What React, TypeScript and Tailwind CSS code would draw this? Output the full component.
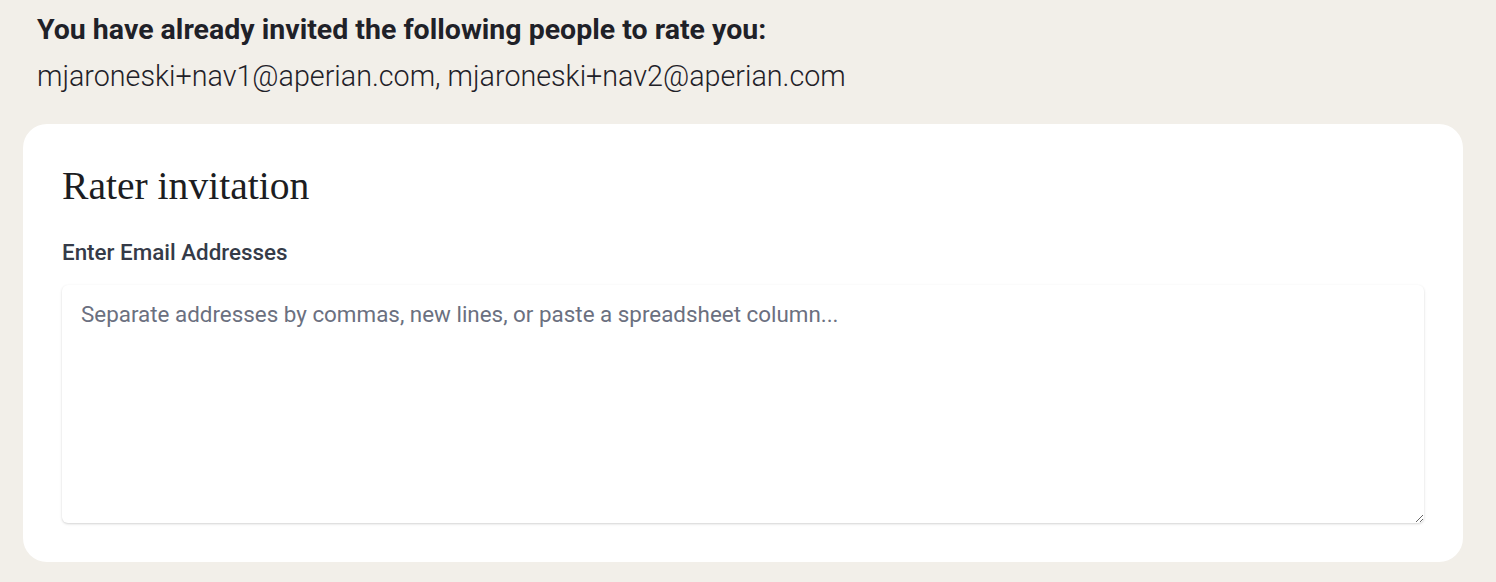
export default function App() {
  return (
    <div className="min-h-[582px] bg-[#f2efe9] pl-[23px] pr-[33px] pt-[10px] pb-5 font-['Roboto',sans-serif]">
      <div className="px-[14px]">
        <p className="text-[28.5px] font-bold leading-[40px] text-[#1f2128]">
          You have already invited the following people to rate you:
        </p>
        <p className="mt-[6px] text-[28.7px] font-light leading-[40px] text-[#1f2128]">
          mjaroneski+nav1@aperian.com, mjaroneski+nav2@aperian.com
        </p>
      </div>
      <div className="mt-[28px] rounded-[24px] bg-white px-[39px] pt-[38px] pb-[39px]">
        <h2 className="font-['Liberation_Serif',serif] text-[39.6px] leading-[48px] text-[#1c1d22]">
          Rater invitation
        </h2>
        <label className="mt-[27px] block text-[22.4px] font-medium leading-[30px] text-[#353b48]">
          Enter Email Addresses
        </label>
        <textarea
          className="mt-[18px] block h-[238px] w-full resize-y rounded-md bg-white px-[19px] py-[14px] text-[22.4px] leading-[30px] text-[#1f2128] shadow-[0_1px_3px_rgba(0,0,0,0.12),0_1px_2px_rgba(0,0,0,0.06)] outline-none placeholder:text-[#6b7080]"
          placeholder="Separate addresses by commas, new lines, or paste a spreadsheet column..."
        />
      </div>
    </div>
  );
}
